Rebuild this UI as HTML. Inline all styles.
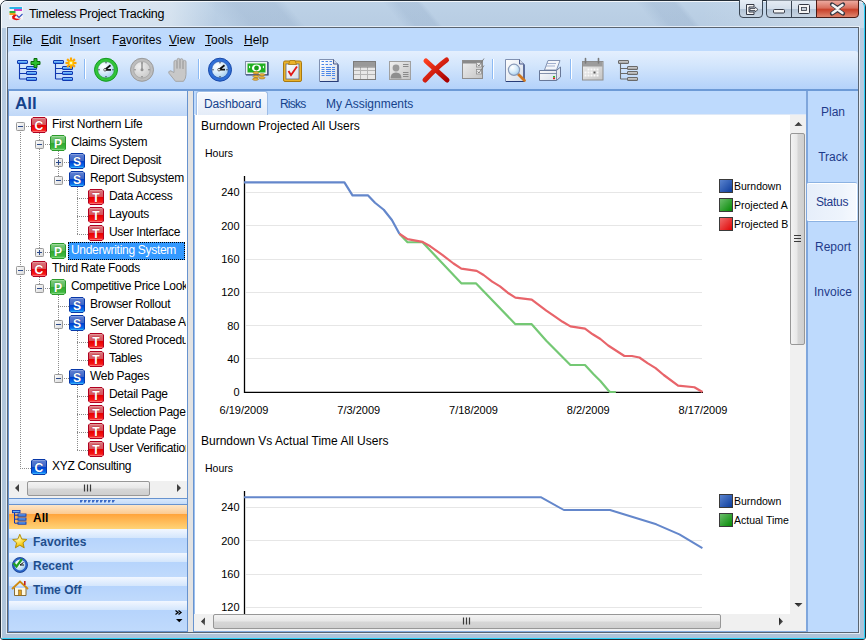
<!DOCTYPE html>
<html><head><meta charset="utf-8">
<style>
*{margin:0;padding:0;box-sizing:border-box}
html,body{width:866px;height:640px;overflow:hidden;background:#fff}
body{position:relative;font-family:"Liberation Sans",sans-serif;font-size:12px;color:#000}
.a{position:absolute}
#frame{left:0;top:0;width:866px;height:640px;border-radius:7px 7px 3px 3px;background:linear-gradient(180deg,#bdd2e7 0px,#b7cce2 28px,#b2c7dc 300px,#aec4da 640px);border:1px solid #222c36;overflow:hidden}
#tglow{left:0;top:0;width:866px;height:27px;background:linear-gradient(90deg,rgba(240,245,250,.7) 0,rgba(235,242,248,.55) 170px,rgba(230,238,246,0) 215px,rgba(230,238,246,0) 700px,rgba(235,242,248,.35) 866px)}
.streak{top:-5px;height:37px;transform:skewX(40deg);background:linear-gradient(90deg,rgba(90,120,160,0),rgba(90,120,160,.13) 35%,rgba(90,120,160,.13) 85%,rgba(90,120,160,0))}
#frame2{left:1px;top:1px;width:864px;height:638px;border-radius:6px 6px 2px 2px;border:1px solid rgba(255,255,255,.8);border-bottom-color:#2ad0f8;border-right-color:#2ad0f8}
#client{left:7px;top:27px;width:852px;height:606px;border:1px solid #5a6470;background:#bedafd;box-shadow:0 0 0 1px rgba(235,242,250,.85)}
#title{left:29px;top:7px;font-size:12.5px;color:#000;white-space:nowrap;letter-spacing:-0.3px}
.menu{top:33px;font-size:12px;color:#000;white-space:nowrap}
.menu u{text-decoration:underline;text-underline-offset:1px;text-decoration-thickness:1px}
#toolbar{left:8px;top:51px;width:850px;height:40px;border-radius:3px 3px 0 0;background:linear-gradient(180deg,#e4effe 0%,#d2e5fc 40%,#b4d2fa 100%);border-bottom:2px solid #6d9ad6}
.sep{top:59px;width:2px;height:20px;border-left:1px solid #8cbaf4;border-right:1px solid #fff}
#left{left:8px;top:91px;width:180px;height:541px;border-left:1px solid #6793cf;border-right:1px solid #6793cf;border-bottom:1px solid #6793cf;background:#fff}
#allhdr{left:0;top:0;width:178px;height:25px;background:linear-gradient(180deg,#e6f0fd 0%,#d2e4fb 50%,#c0d8f8 100%)}
#allhdr span{position:absolute;left:6px;top:3px;font-size:17px;font-weight:bold;color:#15428b}
#splitter{left:188px;top:91px;width:5px;height:541px;background:#e3e3e3}
#content{left:193px;top:91px;width:615px;height:541px;border-left:1px solid #6793cf;border-right:2px solid #7fa6dc;border-bottom:1px solid #84aade;background:#fff;overflow:hidden}
#tabstrip{left:0;top:0;width:613px;height:24px;background:#bedafd;border-bottom:1px solid #dfe9f7}
#nav{left:808px;top:91px;width:50px;height:541px;background:#bedafd}
.navt{left:0;width:50px;text-align:center;font-size:12px;color:#1e3a8a}
.tree{font-size:12px;white-space:nowrap;color:#000;line-height:14px;padding:0 1px;letter-spacing:-0.3px}
.sel{background:#3399ff;color:#fff;outline:1px dotted #000;outline-offset:-1px}
#treeclip{left:9px;top:116px;width:177px;height:365px;overflow:hidden}
#treein{left:-9px;top:-116px;width:200px;height:500px}
.hsb{background:#f0f0f0}
.thumbh{border:1px solid #979797;border-radius:2px;background:linear-gradient(180deg,#f3f3f3 0%,#e8e8e8 45%,#d6d6d6 55%,#cfcfcf 100%)}
.thumbv{border:1px solid #979797;border-radius:2px;background:linear-gradient(90deg,#f3f3f3 0%,#e8e8e8 45%,#d6d6d6 55%,#cfcfcf 100%)}
.nb{left:9px;width:178px;height:24px;background:linear-gradient(180deg,#f2f7ff 0px,#d4e6fc 9px,#b6d4fc 9px,#c0dafc 24px)}
.nb span{position:absolute;left:24px;top:6px;font-weight:bold;font-size:12px;color:#1f4e8c}
.ctext{font-size:12px;white-space:nowrap}
</style></head><body>
<svg width="0" height="0" style="position:absolute">
<defs>
<linearGradient id="gbox" x1="0" y1="0" x2="1" y2="1"><stop offset="0" stop-color="#fff"/><stop offset="1" stop-color="#d8d8d8"/></linearGradient>
<linearGradient id="gC" x1="0" y1="0" x2="0" y2="1"><stop offset="0" stop-color="#f0c0b8"/><stop offset=".12" stop-color="#d87078"/><stop offset=".5" stop-color="#d85058"/><stop offset=".52" stop-color="#e80000"/><stop offset=".85" stop-color="#f81818"/><stop offset="1" stop-color="#ffb0b0"/></linearGradient>
<linearGradient id="gP" x1="0" y1="0" x2="0" y2="1"><stop offset="0" stop-color="#c8f0c0"/><stop offset=".12" stop-color="#78c878"/><stop offset=".5" stop-color="#58b858"/><stop offset=".52" stop-color="#30a830"/><stop offset=".85" stop-color="#40b840"/><stop offset="1" stop-color="#b0f0b0"/></linearGradient>
<linearGradient id="gS" x1="0" y1="0" x2="0" y2="1"><stop offset="0" stop-color="#b8c8f0"/><stop offset=".12" stop-color="#5a7cd0"/><stop offset=".5" stop-color="#3a64c8"/><stop offset=".52" stop-color="#0040d0"/><stop offset=".85" stop-color="#0870f0"/><stop offset="1" stop-color="#60e0ff"/></linearGradient>
<path id="icbox" d="M2 .5 H14 L15.5 2 V14 L14 15.5 H2 L.5 14 V2 Z"/>
<g id="icC"><use href="#icbox" fill="url(#gC)" stroke="#b00020"/><text x="8" y="13.2" text-anchor="middle" font-family="Liberation Sans" font-weight="bold" font-size="13.5" fill="#fff" stroke="#a00010" stroke-width=".5" paint-order="stroke" transform="translate(8 0) scale(.9 1) translate(-8 0)">C</text></g>
<g id="icT"><use href="#icbox" fill="url(#gC)" stroke="#b00020"/><text x="8" y="13.2" text-anchor="middle" font-family="Liberation Sans" font-weight="bold" font-size="13.5" fill="#fff" stroke="#a00010" stroke-width=".5" paint-order="stroke" transform="translate(8 0) scale(.9 1) translate(-8 0)">T</text></g>
<g id="icP"><use href="#icbox" fill="url(#gP)" stroke="#2c9a2c"/><text x="8" y="13.2" text-anchor="middle" font-family="Liberation Sans" font-weight="bold" font-size="13.5" fill="#fff" stroke="#208020" stroke-width=".5" paint-order="stroke" transform="translate(8 0) scale(.9 1) translate(-8 0)">P</text></g>
<g id="icS"><use href="#icbox" fill="url(#gS)" stroke="#0838a8"/><text x="8" y="13.2" text-anchor="middle" font-family="Liberation Sans" font-weight="bold" font-size="13.5" fill="#fff" stroke="#002880" stroke-width=".5" paint-order="stroke" transform="translate(8 0) scale(.9 1) translate(-8 0)">S</text></g>
<g id="icCB"><use href="#icbox" fill="url(#gS)" stroke="#0838a8"/><text x="8" y="13.2" text-anchor="middle" font-family="Liberation Sans" font-weight="bold" font-size="13.5" fill="#fff" stroke="#002880" stroke-width=".5" paint-order="stroke" transform="translate(8 0) scale(.9 1) translate(-8 0)">C</text></g>
</defs></svg>
<div id="frame" class="a"><div id="tglow" class="a"></div><div class="a streak" style="left:215px;width:80px"></div><div class="a streak" style="left:392px;width:40px"></div><div class="a streak" style="left:645px;width:45px"></div></div>
<div id="frame2" class="a"></div>
<svg class="a" style="left:736px;top:0" width="130" height="20" viewBox="736 0 130 20">
<defs>
<linearGradient id="tbg" x1="0" y1="0" x2="0" y2="1"><stop offset="0" stop-color="#e6edf5"/><stop offset=".5" stop-color="#d4dfeb"/><stop offset=".52" stop-color="#b3c4d6"/><stop offset="1" stop-color="#c9d6e4"/></linearGradient>
<linearGradient id="tcl" x1="0" y1="0" x2="0" y2="1"><stop offset="0" stop-color="#eeb0a6"/><stop offset=".45" stop-color="#d9705e"/><stop offset=".55" stop-color="#c8412a"/><stop offset="1" stop-color="#e08a74"/></linearGradient>
</defs>
<path d="M739.5 0 V14 Q739.5 17.5 743 17.5 H759 Q762.5 17.5 762.5 14 V0" fill="url(#tbg)" stroke="#3a4654"/>
<path d="M766.5 0 V14 Q766.5 17.5 770 17.5 H816.5 V0 Z" fill="url(#tbg)" stroke="#3a4654"/>
<line x1="791.5" y1="1" x2="791.5" y2="17" stroke="#3a4654"/>
<path d="M816.5 0 V17.5 H855 Q858.5 17.5 858.5 14 V0 Z" fill="url(#tcl)" stroke="#4a1a14"/>
<path d="M746.5 4.5 H754 V7 H749 V12 H754 V14.5 H746.5 Z" fill="#f4f4f4" stroke="#343844"/>
<path d="M750 8.5 H755 V7 L758 9.5 L755 12 V10.5 H750 Z" fill="#f4f4f4" stroke="#343844" stroke-width=".8"/>
<rect x="773.5" y="9.5" width="11" height="3.5" rx="1" fill="#f4f4f4" stroke="#343844"/>
<rect x="798.5" y="4.5" width="11" height="9" rx="1" fill="#f4f4f4" stroke="#343844"/>
<rect x="801.5" y="7.5" width="5" height="3" fill="#c8d0da" stroke="#343844" stroke-width=".8"/>
<path d="M832 4.5 L837.5 8 L843 4.5 M832 13.5 L837.5 10 L843 13.5" stroke="#343844" stroke-width="4.2" fill="none" stroke-linecap="round"/>
<path d="M832.5 5 L837.5 8.5 L842.5 5 M832.5 13 L837.5 9.5 L842.5 13" stroke="#f6f6f6" stroke-width="2.4" fill="none" stroke-linecap="round"/>
</svg>
<svg class="a" style="left:8px;top:5px" width="17" height="17" viewBox="0 0 17 17">
<rect x="1" y="1.5" width="14" height="13" fill="#f4f4f8"/>
<rect x="1.5" y="2" width="12.5" height="2" fill="#2ab4e8"/>
<rect x="6" y="4" width="8" height="2" fill="#d040c0"/>
<rect x="1.5" y="6" width="6" height="2" fill="#30b040"/>
<rect x="1.5" y="8" width="6" height="2" fill="#f0a020"/>
<path d="M4 11.5 Q6 8.5 10 10 Q7 10.5 6.5 12.5 Q8 14.5 13 13.5 Q9 16.5 4.5 14 Z" fill="#e01010"/>
<path d="M9 10.5 L11 12.5 L14.5 9" stroke="#3050c0" stroke-width="1.1" fill="none"/>
</svg>
<div id="title" class="a">Timeless Project Tracking</div>
<div id="client" class="a"></div>
<div class="a menu" style="left:13px"><u>F</u>ile</div>
<div class="a menu" style="left:41px"><u>E</u>dit</div>
<div class="a menu" style="left:70px"><u>I</u>nsert</div>
<div class="a menu" style="left:112px">F<u>a</u>vorites</div>
<div class="a menu" style="left:169px"><u>V</u>iew</div>
<div class="a menu" style="left:205px"><u>T</u>ools</div>
<div class="a menu" style="left:244px"><u>H</u>elp</div>
<div id="toolbar" class="a"></div>
<div class="a sep" style="left:84px"></div>
<div class="a sep" style="left:198px"></div>
<div class="a sep" style="left:492px"></div>
<div class="a sep" style="left:570px"></div>
<svg class="a" style="left:8px;top:51px" width="850" height="38" viewBox="8 51 850 38">
<defs>
<linearGradient id="tbar" x1="0" y1="0" x2="0" y2="1"><stop offset="0" stop-color="#b4dcff"/><stop offset=".5" stop-color="#5ca8f8"/><stop offset="1" stop-color="#2a78e0"/></linearGradient>
<linearGradient id="gbar" x1="0" y1="0" x2="0" y2="1"><stop offset="0" stop-color="#d8d8d8"/><stop offset="1" stop-color="#9a9a9a"/></linearGradient>
<radialGradient id="face" cx=".35" cy=".3" r=".8"><stop offset="0" stop-color="#ffffff"/><stop offset=".5" stop-color="#d8ecfa"/><stop offset="1" stop-color="#9cc8ec"/></radialGradient>
<radialGradient id="gface" cx=".35" cy=".3" r=".8"><stop offset="0" stop-color="#f0f0f0"/><stop offset="1" stop-color="#c8c8c8"/></radialGradient>
<linearGradient id="paper" x1="0" y1="0" x2="1" y2="1"><stop offset="0" stop-color="#ffffff"/><stop offset="1" stop-color="#d4dce8"/></linearGradient>
<linearGradient id="gray1" x1="0" y1="0" x2="1" y2="1"><stop offset="0" stop-color="#f0f0f0"/><stop offset="1" stop-color="#c4c4c4"/></linearGradient>
<linearGradient id="redx" x1="0" y1="0" x2="1" y2="1"><stop offset="0" stop-color="#ff4020"/><stop offset="1" stop-color="#a80000"/></linearGradient>
</defs>
<path d="M19.5 63 V79 M19.5 68.5 H26 M19.5 73.5 H26 M19.5 79 H26" stroke="#1038b0" stroke-width="1.1" fill="none"/>
<rect x="17.5" y="60.5" width="10" height="3" rx=".4" fill="url(#tbar)" stroke="#1038b0"/>
<rect x="26.5" y="66.5" width="10" height="3" rx=".4" fill="url(#tbar)" stroke="#1038b0"/>
<rect x="26.5" y="71.5" width="10" height="3" rx=".4" fill="url(#tbar)" stroke="#1038b0"/>
<rect x="26.5" y="77.5" width="10" height="3" rx=".4" fill="url(#tbar)" stroke="#1038b0"/>
<path d="M34 58.5 h3 v3 h3 v3 h-3 v3 h-3 v-3 h-3 v-3 h3 z" fill="#2cc02c" stroke="#0a6a0a" stroke-width="1"/>
<path d="M55.5 63 V79 M55.5 68.5 H62 M55.5 73.5 H62 M55.5 79 H62" stroke="#1038b0" stroke-width="1.1" fill="none"/>
<rect x="53.5" y="60.5" width="10" height="3" rx=".4" fill="url(#tbar)" stroke="#1038b0"/>
<rect x="62.5" y="66.5" width="10" height="3" rx=".4" fill="url(#tbar)" stroke="#1038b0"/>
<rect x="62.5" y="71.5" width="10" height="3" rx=".4" fill="url(#tbar)" stroke="#1038b0"/>
<rect x="62.5" y="77.5" width="10" height="3" rx=".4" fill="url(#tbar)" stroke="#1038b0"/>
<g transform="translate(71 63)"><line x1="0" y1="0" x2="5.50" y2="0.00" stroke="#ffa800" stroke-width="2.2"/><line x1="0" y1="0" x2="3.89" y2="3.89" stroke="#ffa800" stroke-width="2.2"/><line x1="0" y1="0" x2="0.00" y2="5.50" stroke="#ffa800" stroke-width="2.2"/><line x1="0" y1="0" x2="-3.89" y2="3.89" stroke="#ffa800" stroke-width="2.2"/><line x1="0" y1="0" x2="-5.50" y2="0.00" stroke="#ffa800" stroke-width="2.2"/><line x1="0" y1="0" x2="-3.89" y2="-3.89" stroke="#ffa800" stroke-width="2.2"/><line x1="0" y1="0" x2="-0.00" y2="-5.50" stroke="#ffa800" stroke-width="2.2"/><line x1="0" y1="0" x2="3.89" y2="-3.89" stroke="#ffa800" stroke-width="2.2"/><circle r="2.2" fill="#ffe020"/><circle r="1" fill="#fff"/></g>
<circle cx="106" cy="69.8" r="11.5" fill="#32c43a" stroke="#139a20" stroke-width="1"/>
<circle cx="106" cy="69.8" r="8.3" fill="url(#face)" stroke="#139a20" stroke-width=".6"/>
<circle cx="106" cy="62.8" r=".7" fill="#203040"/>
<circle cx="113" cy="69.8" r=".7" fill="#203040"/>
<circle cx="106" cy="76.8" r=".7" fill="#203040"/>
<circle cx="99" cy="69.8" r=".7" fill="#203040"/>
<path d="M105 69.8 L110.5 65.3 M105 69.8 H111" stroke="#101010" stroke-width="1.8" fill="none"/><circle cx="105" cy="69.8" r="1.3" fill="#fff" stroke="#101010" stroke-width=".6"/>
<circle cx="142" cy="69.8" r="11.5" fill="#bdbdbd" stroke="#9a9a9a" stroke-width="1"/>
<circle cx="142" cy="69.8" r="8.3" fill="url(#gface)" stroke="#9a9a9a" stroke-width=".6"/>
<circle cx="142" cy="62.8" r=".7" fill="#707070"/>
<circle cx="149" cy="69.8" r=".7" fill="#707070"/>
<circle cx="142" cy="76.8" r=".7" fill="#707070"/>
<circle cx="135" cy="69.8" r=".7" fill="#707070"/>
<path d="M142 69.8 V62.8" stroke="#808080" stroke-width="1.2"/><circle cx="142" cy="69.8" r="1.5" fill="#909090"/>
<g transform="translate(3 0.5)"><path d="M171 72 V61.5 q0-1.6 1.5-1.6 t1.5 1.6 V68 V59.5 q0-1.6 1.5-1.6 t1.5 1.6 V68 V59.8 q0-1.6 1.5-1.6 t1.5 1.6 V68.5 V61.5 q0-1.6 1.5-1.6 t1.5 1.6 V74 q0 4 -2.5 6.8 h-8 l-6.5 -8 q-0.8-1.6 0.6-2.3 q1.3-0.6 2.6 0.6 z" fill="#c8c8c8" stroke="#a4a4a4" stroke-width="1"/></g>
<circle cx="220" cy="69.7" r="11.5" fill="#2f6fd6" stroke="#1848a8" stroke-width="1"/>
<circle cx="220" cy="69.7" r="8.3" fill="url(#face)" stroke="#1848a8" stroke-width=".6"/>
<circle cx="220" cy="62.7" r=".7" fill="#203040"/>
<circle cx="227" cy="69.7" r=".7" fill="#203040"/>
<circle cx="220" cy="76.7" r=".7" fill="#203040"/>
<circle cx="213" cy="69.7" r=".7" fill="#203040"/>
<path d="M219 69.7 L224.5 65.2 M219 69.7 H225" stroke="#101010" stroke-width="1.8" fill="none"/><circle cx="219" cy="69.7" r="1.3" fill="#fff" stroke="#101010" stroke-width=".6"/>
<rect x="245.5" y="61.5" width="22" height="13" fill="#eef2f8" stroke="#8090a8"/>
<path d="M268 62 V75 H246" stroke="#2a3c70" stroke-width="1.2" fill="none"/>
<rect x="247.5" y="63.5" width="18" height="9" fill="#20b020"/>
<ellipse cx="256.5" cy="68" rx="4.6" ry="3.6" fill="#fff"/><circle cx="256.5" cy="68" r="2.4" fill="#18a018"/>
<path d="M249 65.5 L250.5 67 L249 68.5 Z M264 65.5 L262.5 67 L264 68.5 Z" fill="#fff"/>
<ellipse cx="256" cy="72.8" rx="3" ry="1.1" fill="#f4c040" stroke="#a87010" stroke-width=".7"/>
<ellipse cx="262" cy="74.8" rx="3" ry="1.1" fill="#f4c040" stroke="#a87010" stroke-width=".7"/>
<ellipse cx="256" cy="76.4" rx="3" ry="1.1" fill="#f4c040" stroke="#a87010" stroke-width=".7"/>
<ellipse cx="262" cy="77.8" rx="3" ry="1.1" fill="#f4c040" stroke="#a87010" stroke-width=".7"/>
<ellipse cx="255.5" cy="79.2" rx="3" ry="1.1" fill="#f4c040" stroke="#a87010" stroke-width=".7"/>
<rect x="283.5" y="61" width="18" height="20.5" rx="1.5" fill="#eab22a" stroke="#a87810"/>
<rect x="286" y="64" width="13" height="15" fill="url(#paper)" stroke="#5a6a90" stroke-width=".8"/>
<path d="M288.5 64.5 L290 60.5 H295 L296.5 64.5 Z" fill="#eab22a" stroke="#a87810" stroke-width=".8"/>
<path d="M288.5 71 L291 75 L297 66.5" stroke="#e01818" stroke-width="1.8" fill="none"/>
<path d="M319.5 59.5 H333.5 L338 64 V81.5 H319.5 Z" fill="url(#paper)" stroke="#8090b0"/>
<path d="M338 64.5 V81.5 H320" stroke="#283c78" stroke-width="1.2" fill="none"/><path d="M333.5 59.5 V64 H338" fill="#d0d8e8" stroke="#283c78" stroke-width=".8"/>
<path d="M321.5 61.5 h2.5 M325.5 61.5 h2.5 M329.5 61.5 h2.5" stroke="#4a86e8" stroke-width="1"/>
<path d="M321.5 64.5 h2.5 M325.5 64.5 h2.5 M329.5 64.5 h2.5" stroke="#4a86e8" stroke-width="1"/>
<path d="M321.5 67.5 h3 M326 67.5 h5 M332 67.5 h3" stroke="#4a86e8" stroke-width="1"/>
<path d="M321.5 69.5 h3 M326 69.5 h5 M332 69.5 h3" stroke="#4a86e8" stroke-width="1"/>
<path d="M321.5 71.5 h3 M326 71.5 h5 M332 71.5 h3" stroke="#4a86e8" stroke-width="1"/>
<path d="M321.5 73.5 h3 M326 73.5 h5 M332 73.5 h3" stroke="#4a86e8" stroke-width="1"/>
<path d="M321.5 75.5 h3 M326 75.5 h5 M332 75.5 h3" stroke="#4a86e8" stroke-width="1"/>
<path d="M332 78.5 h3" stroke="#4a86e8" stroke-width="1"/>
<rect x="353.5" y="61.5" width="22" height="18" fill="#e8e8e8" stroke="#7c7c7c"/>
<rect x="354" y="62" width="21" height="4.5" fill="#999"/>
<path d="M354 70.5 H375 M354 74.5 H375 M360.5 67 V79 M367.5 67 V79" stroke="#b4b4b4" stroke-width="1"/>
<path d="M354 67 H375" stroke="#7c7c7c" stroke-width="1"/>
<rect x="389.5" y="61.5" width="21" height="18" fill="url(#gray1)" stroke="#a0a0a0"/>
<circle cx="396" cy="68" r="3.4" fill="#9a9a9a"/><path d="M390.5 78.5 q0-6 5.5-6 t5.5 6 z" fill="#8e8e8e"/>
<path d="M403 64.5 h5.5 M403 66.5 h5.5 M403 72.5 h5.5 M403 74.5 h5.5 M403 76.5 h5.5" stroke="#8a8a8a" stroke-width="1"/>
<path d="M426 61 L447 80 M446.5 60 Q437 67 425 80" stroke="url(#redx)" stroke-width="5" stroke-linecap="round" fill="none"/>
<rect x="462.5" y="60.5" width="20" height="18" fill="url(#gray1)" stroke="#8e8e8e"/>
<rect x="463" y="61" width="19" height="2.5" fill="#8a8a8a"/>
<rect x="476.5" y="62.5" width="5" height="4.5" fill="#e8e8e8" stroke="#909090" stroke-width=".8"/><rect x="476.5" y="69.5" width="5" height="4.5" fill="#e8e8e8" stroke="#909090" stroke-width=".8"/>
<path d="M477.5 64.5 L479 66 L484 58.5 M477.5 71.5 L479 73 L484 65.5" stroke="#7a7a7a" stroke-width=".9" fill="none"/>
<path d="M505.5 59.5 H519.5 L524 64 V81.5 H505.5 Z" fill="url(#paper)" stroke="#8090b0"/>
<path d="M524 64.5 V81.5 H506" stroke="#283c78" stroke-width="1.2" fill="none"/><path d="M519.5 59.5 V64 H524" fill="#d0d8e8" stroke="#283c78" stroke-width=".8"/>
<path d="M518 74 L524.5 80.5" stroke="#d07820" stroke-width="2.8" stroke-linecap="round"/>
<circle cx="514" cy="69.8" r="5.6" fill="url(#face)" stroke="#8a9ab8" stroke-width="1.2"/>
<path d="M544.5 70 L548 60.5 H560 L556.5 70 Z" fill="#f4f6fa" stroke="#7888a8" stroke-width=".9"/>
<path d="M547 63.5 h9 M546 66 h9" stroke="#98a8c8" stroke-width=".9"/>
<path d="M539.5 70.5 H556.5 L560.5 67 V77 L556.5 80.5 H539.5 Z" fill="url(#paper)" stroke="#687898"/>
<path d="M556.5 70.5 V80.5 M539.5 73.5 H556.5" stroke="#687898" stroke-width=".8"/>
<rect x="553" y="76" width="2" height="1.6" fill="#20c020"/><rect x="553" y="77.6" width="2" height="1.6" fill="#e02020"/>
<rect x="582.5" y="61.5" width="20.5" height="18.5" fill="url(#gray1)" stroke="#8e8e8e"/>
<rect x="583" y="62" width="19.5" height="4.5" fill="#9c9c9c"/>
<path d="M585.5 58.5 V63 M598.5 58.5 V63" stroke="#7a7a7a" stroke-width="1.6" stroke-linecap="round"/>
<rect x="587.5" y="68.5" width="2" height="2" fill="#fafafa"/>
<rect x="590.5" y="68.5" width="2" height="2" fill="#fafafa"/>
<rect x="593.5" y="68.5" width="2" height="2" fill="#fafafa"/>
<rect x="596.5" y="68.5" width="2" height="2" fill="#fafafa"/>
<rect x="584.5" y="71.5" width="2" height="2" fill="#fafafa"/>
<rect x="587.5" y="71.5" width="2" height="2" fill="#fafafa"/>
<rect x="590.5" y="71.5" width="2" height="2" fill="#fafafa"/>
<rect x="593.5" y="71.5" width="2" height="2" fill="#fafafa"/>
<rect x="596.5" y="71.5" width="2" height="2" fill="#fafafa"/>
<rect x="584.5" y="74.5" width="2" height="2" fill="#fafafa"/>
<rect x="587.5" y="74.5" width="2" height="2" fill="#fafafa"/>
<rect x="590.5" y="74.5" width="2" height="2" fill="#fafafa"/>
<rect x="593.5" y="74.5" width="2" height="2" fill="#fafafa"/>
<rect x="596.5" y="74.5" width="2" height="2" fill="#fafafa"/>
<rect x="593.5" y="71.5" width="2" height="2" fill="#555"/>
<path d="M620.5 63 V79 M620.5 68.5 H627 M620.5 73.5 H627 M620.5 79 H627" stroke="#6a6a6a" stroke-width="1.1" fill="none"/>
<rect x="618.5" y="60.5" width="10" height="3" rx=".4" fill="url(#gbar)" stroke="#6a6a6a"/>
<rect x="627.5" y="66.5" width="10" height="3" rx=".4" fill="url(#gbar)" stroke="#6a6a6a"/>
<rect x="627.5" y="71.5" width="10" height="3" rx=".4" fill="url(#gbar)" stroke="#6a6a6a"/>
<rect x="627.5" y="77.5" width="10" height="3" rx=".4" fill="url(#gbar)" stroke="#6a6a6a"/>
</svg>

<div id="left" class="a">
  <div id="allhdr" class="a"><span>All</span></div>
</div>
<div id="treeclip" class="a"><div id="treein" class="a">
<svg class="a" style="left:0;top:0" width="187" height="480">
<line x1="20.5" y1="126" x2="20.5" y2="469" stroke="#8c8c8c" stroke-dasharray="1 1"/>
<line x1="39.5" y1="133" x2="39.5" y2="253" stroke="#8c8c8c" stroke-dasharray="1 1"/>
<line x1="58.5" y1="151" x2="58.5" y2="181" stroke="#8c8c8c" stroke-dasharray="1 1"/>
<line x1="77.5" y1="187" x2="77.5" y2="235" stroke="#8c8c8c" stroke-dasharray="1 1"/>
<line x1="39.5" y1="277" x2="39.5" y2="289" stroke="#8c8c8c" stroke-dasharray="1 1"/>
<line x1="58.5" y1="295" x2="58.5" y2="379" stroke="#8c8c8c" stroke-dasharray="1 1"/>
<line x1="77.5" y1="331" x2="77.5" y2="361" stroke="#8c8c8c" stroke-dasharray="1 1"/>
<line x1="77.5" y1="385" x2="77.5" y2="451" stroke="#8c8c8c" stroke-dasharray="1 1"/>
<line x1="20" y1="126.5" x2="31" y2="126.5" stroke="#8c8c8c" stroke-dasharray="1 1"/>
<line x1="39" y1="144.5" x2="50" y2="144.5" stroke="#8c8c8c" stroke-dasharray="1 1"/>
<line x1="58" y1="162.5" x2="69" y2="162.5" stroke="#8c8c8c" stroke-dasharray="1 1"/>
<line x1="58" y1="180.5" x2="69" y2="180.5" stroke="#8c8c8c" stroke-dasharray="1 1"/>
<line x1="77" y1="198.5" x2="88" y2="198.5" stroke="#8c8c8c" stroke-dasharray="1 1"/>
<line x1="77" y1="216.5" x2="88" y2="216.5" stroke="#8c8c8c" stroke-dasharray="1 1"/>
<line x1="77" y1="234.5" x2="88" y2="234.5" stroke="#8c8c8c" stroke-dasharray="1 1"/>
<line x1="39" y1="252.5" x2="50" y2="252.5" stroke="#8c8c8c" stroke-dasharray="1 1"/>
<line x1="20" y1="270.5" x2="31" y2="270.5" stroke="#8c8c8c" stroke-dasharray="1 1"/>
<line x1="39" y1="288.5" x2="50" y2="288.5" stroke="#8c8c8c" stroke-dasharray="1 1"/>
<line x1="58" y1="306.5" x2="69" y2="306.5" stroke="#8c8c8c" stroke-dasharray="1 1"/>
<line x1="58" y1="324.5" x2="69" y2="324.5" stroke="#8c8c8c" stroke-dasharray="1 1"/>
<line x1="77" y1="342.5" x2="88" y2="342.5" stroke="#8c8c8c" stroke-dasharray="1 1"/>
<line x1="77" y1="360.5" x2="88" y2="360.5" stroke="#8c8c8c" stroke-dasharray="1 1"/>
<line x1="58" y1="378.5" x2="69" y2="378.5" stroke="#8c8c8c" stroke-dasharray="1 1"/>
<line x1="77" y1="396.5" x2="88" y2="396.5" stroke="#8c8c8c" stroke-dasharray="1 1"/>
<line x1="77" y1="414.5" x2="88" y2="414.5" stroke="#8c8c8c" stroke-dasharray="1 1"/>
<line x1="77" y1="432.5" x2="88" y2="432.5" stroke="#8c8c8c" stroke-dasharray="1 1"/>
<line x1="77" y1="450.5" x2="88" y2="450.5" stroke="#8c8c8c" stroke-dasharray="1 1"/>
<line x1="20" y1="468.5" x2="31" y2="468.5" stroke="#8c8c8c" stroke-dasharray="1 1"/>
<rect x="16.5" y="122.5" width="8" height="8" rx=".8" fill="url(#gbox)" stroke="#999"/>
<line x1="18" y1="126.5" x2="23" y2="126.5" stroke="#2b4a8a"/>
<use href="#icC" x="31" y="117"/>
<rect x="35.5" y="140.5" width="8" height="8" rx=".8" fill="url(#gbox)" stroke="#999"/>
<line x1="37" y1="144.5" x2="42" y2="144.5" stroke="#2b4a8a"/>
<use href="#icP" x="50" y="135"/>
<rect x="54.5" y="158.5" width="8" height="8" rx=".8" fill="url(#gbox)" stroke="#999"/>
<line x1="56" y1="162.5" x2="61" y2="162.5" stroke="#2b4a8a"/>
<line x1="58.5" y1="160" x2="58.5" y2="165" stroke="#2b4a8a"/>
<use href="#icS" x="69" y="153"/>
<rect x="54.5" y="176.5" width="8" height="8" rx=".8" fill="url(#gbox)" stroke="#999"/>
<line x1="56" y1="180.5" x2="61" y2="180.5" stroke="#2b4a8a"/>
<use href="#icS" x="69" y="171"/>
<use href="#icT" x="88" y="189"/>
<use href="#icT" x="88" y="207"/>
<use href="#icT" x="88" y="225"/>
<rect x="35.5" y="248.5" width="8" height="8" rx=".8" fill="url(#gbox)" stroke="#999"/>
<line x1="37" y1="252.5" x2="42" y2="252.5" stroke="#2b4a8a"/>
<line x1="39.5" y1="250" x2="39.5" y2="255" stroke="#2b4a8a"/>
<use href="#icP" x="50" y="243"/>
<rect x="16.5" y="266.5" width="8" height="8" rx=".8" fill="url(#gbox)" stroke="#999"/>
<line x1="18" y1="270.5" x2="23" y2="270.5" stroke="#2b4a8a"/>
<use href="#icC" x="31" y="261"/>
<rect x="35.5" y="284.5" width="8" height="8" rx=".8" fill="url(#gbox)" stroke="#999"/>
<line x1="37" y1="288.5" x2="42" y2="288.5" stroke="#2b4a8a"/>
<use href="#icP" x="50" y="279"/>
<use href="#icS" x="69" y="297"/>
<rect x="54.5" y="320.5" width="8" height="8" rx=".8" fill="url(#gbox)" stroke="#999"/>
<line x1="56" y1="324.5" x2="61" y2="324.5" stroke="#2b4a8a"/>
<use href="#icS" x="69" y="315"/>
<use href="#icT" x="88" y="333"/>
<use href="#icT" x="88" y="351"/>
<rect x="54.5" y="374.5" width="8" height="8" rx=".8" fill="url(#gbox)" stroke="#999"/>
<line x1="56" y1="378.5" x2="61" y2="378.5" stroke="#2b4a8a"/>
<use href="#icS" x="69" y="369"/>
<use href="#icT" x="88" y="387"/>
<use href="#icT" x="88" y="405"/>
<use href="#icT" x="88" y="423"/>
<use href="#icT" x="88" y="441"/>
<use href="#icCB" x="31" y="459"/>
</svg>
<div class="tree a" style="left:51px;top:117px">First Northern Life</div>
<div class="tree a" style="left:70px;top:135px">Claims System</div>
<div class="tree a" style="left:89px;top:153px">Direct Deposit</div>
<div class="tree a" style="left:89px;top:171px">Report Subsystem</div>
<div class="tree a" style="left:108px;top:189px">Data Access</div>
<div class="tree a" style="left:108px;top:207px">Layouts</div>
<div class="tree a" style="left:108px;top:225px">User Interface</div>
<div class="tree a sel" style="left:68px;top:242px;width:117px;height:18px;padding:1px 0 0 3px">Underwriting System</div>
<div class="tree a" style="left:51px;top:261px">Third Rate Foods</div>
<div class="tree a" style="left:70px;top:279px">Competitive Price Look</div>
<div class="tree a" style="left:89px;top:297px">Browser Rollout</div>
<div class="tree a" style="left:89px;top:315px">Server Database Access</div>
<div class="tree a" style="left:108px;top:333px">Stored Procedures</div>
<div class="tree a" style="left:108px;top:351px">Tables</div>
<div class="tree a" style="left:89px;top:369px">Web Pages</div>
<div class="tree a" style="left:108px;top:387px">Detail Page</div>
<div class="tree a" style="left:108px;top:405px">Selection Page</div>
<div class="tree a" style="left:108px;top:423px">Update Page</div>
<div class="tree a" style="left:108px;top:441px">User Verification</div>
<div class="tree a" style="left:51px;top:459px">XYZ Consulting</div>
</div></div>
<!-- left h scrollbar -->
<div class="a hsb" style="left:9px;top:481px;width:178px;height:17px"></div>
<div class="a thumbh" style="left:27px;top:481px;width:123px;height:15px"></div>
<div class="a" style="left:15px;top:484px;width:0;height:0;border-top:4px solid transparent;border-bottom:4px solid transparent;border-right:4px solid #404040"></div>
<div class="a" style="left:177px;top:484px;width:0;height:0;border-top:4px solid transparent;border-bottom:4px solid transparent;border-left:4px solid #404040"></div>
<div class="a" style="left:9px;top:498px;width:178px;height:7px;background:linear-gradient(180deg,#6793cf 0,#6793cf 1px,#d8e8fc 1px,#c4dcfa 6px,#6793cf 6px)"></div>
<div class="nb a" style="top:505px;background:linear-gradient(180deg,#fde6c8 0px,#fcca90 9px,#ffa33a 9px,#ffd478 24px)"><span style="color:#000">All</span></div>
<div class="nb a" style="top:529px"><span>Favorites</span></div>
<div class="nb a" style="top:553px"><span>Recent</span></div>
<div class="nb a" style="top:577px"><span>Time Off</span></div>
<div class="nb a" style="top:601px;height:30px;background:linear-gradient(180deg,#f2f7ff 0px,#d4e6fc 9px,#b6d4fc 9px,#c0dafc 30px)"></div>

<svg class="a" style="left:9px;top:498px" width="178" height="134" viewBox="9 498 178 134">
<defs>
<linearGradient id="tbar2" x1="0" y1="0" x2="0" y2="1"><stop offset="0" stop-color="#b4dcff"/><stop offset=".5" stop-color="#5ca8f8"/><stop offset="1" stop-color="#2a78e0"/></linearGradient>
<radialGradient id="starg" cx=".4" cy=".35" r=".7"><stop offset="0" stop-color="#fff8b0"/><stop offset=".6" stop-color="#f8d020"/><stop offset="1" stop-color="#d8a000"/></radialGradient>
<radialGradient id="face2" cx=".35" cy=".3" r=".8"><stop offset="0" stop-color="#ffffff"/><stop offset=".5" stop-color="#d8ecfa"/><stop offset="1" stop-color="#9cc8ec"/></radialGradient>
</defs>
<g fill="#3a6ac8"><path d="M80 500 h3 l-1.5 2.5 h-1.5 z"/><path d="M84 500 h3 l-1.5 2.5 h-1.5 z"/><path d="M88 500 h3 l-1.5 2.5 h-1.5 z"/><path d="M92 500 h3 l-1.5 2.5 h-1.5 z"/><path d="M96 500 h3 l-1.5 2.5 h-1.5 z"/><path d="M100 500 h3 l-1.5 2.5 h-1.5 z"/><path d="M104 500 h3 l-1.5 2.5 h-1.5 z"/><path d="M108 500 h3 l-1.5 2.5 h-1.5 z"/><path d="M112 500 h3 l-1.5 2.5 h-1.5 z"/></g><path d="M14.5 513 V523 M14.5 515.2 H18 M14.5 519.2 H18 M14.5 523.2 H18" stroke="#1038b0" stroke-width="1" fill="none"/><rect x="12.5" y="510.5" width="7.5" height="2.2" fill="url(#tbar2)" stroke="#1038b0" stroke-width=".9"/><rect x="18" y="514" width="8" height="2.2" fill="url(#tbar2)" stroke="#1038b0" stroke-width=".9"/><rect x="18" y="518" width="8" height="2.2" fill="url(#tbar2)" stroke="#1038b0" stroke-width=".9"/><rect x="18" y="522" width="8" height="2.2" fill="url(#tbar2)" stroke="#1038b0" stroke-width=".9"/><polygon points="19.80,534.30 21.80,539.05 26.93,539.48 23.03,542.85 24.21,547.87 19.80,545.20 15.39,547.87 16.57,542.85 12.67,539.48 17.80,539.05" fill="url(#starg)" stroke="#b08800" stroke-width=".9" stroke-linejoin="round"/><circle cx="20" cy="565" r="7.5" fill="#2a64c8" stroke="#103888" stroke-width=".8"/><circle cx="20" cy="565" r="5.4" fill="url(#face2)"/><path d="M20 565 L23.5 562.5 M20 565 H24" stroke="#101010" stroke-width="1"/><path d="M13.5 563 L16.5 566.5 L22 559" stroke="#20a020" stroke-width="2.2" fill="none"/><path d="M14.5 588 V595.5 H26 V588" fill="#fff8e0" stroke="#806020" stroke-width=".9"/><path d="M12 589 L20 581.5 L28 589" fill="none" stroke="#d08a10" stroke-width="1.8"/><rect x="24" y="581" width="1.6" height="4" fill="#c02020"/><rect x="18.5" y="590" width="3" height="5.5" fill="#e0a020" stroke="#806020" stroke-width=".6"/><path d="M175.5 610.5 L178 612.5 L175.5 614.5 M178.5 610.5 L181 612.5 L178.5 614.5" stroke="#000" stroke-width="1.3" fill="none"/><path d="M176 619 H182.5 L179.25 622.2 Z" fill="#000"/></svg>
<div id="splitter" class="a"></div>
<div id="content" class="a">
  <div id="tabstrip" class="a"></div>
</div>
<div class="a" style="left:196px;top:91px;width:72px;height:24px;border:1px solid #9ebde6;border-bottom:none;border-radius:3px 3px 0 0;background:linear-gradient(180deg,#f6f9fe,#e4ecf8);box-shadow:inset 1px 1px 0 #fff"></div>
<div class="a ctext" style="left:204px;top:97px;color:#15428b;letter-spacing:-0.15px">Dashboard</div>
<div class="a ctext" style="left:280px;top:97px;color:#15428b;letter-spacing:-0.8px">Risks</div>
<div class="a ctext" style="left:326px;top:97px;color:#15428b">My Assignments</div>
<svg class="a" style="left:194px;top:115px" width="596" height="499" viewBox="194 115 596 499">
<text x="201" y="130" font-family="Liberation Sans" font-size="12" fill="#000">Burndown Projected All Users</text>
<text x="205" y="157" font-family="Liberation Sans" font-size="10.5" fill="#000">Hours</text>
<line x1="246" y1="358.5" x2="702" y2="358.5" stroke="#e6e6e6" stroke-width="1"/>
<line x1="246" y1="325.5" x2="702" y2="325.5" stroke="#e6e6e6" stroke-width="1"/>
<line x1="246" y1="292.5" x2="702" y2="292.5" stroke="#e6e6e6" stroke-width="1"/>
<line x1="246" y1="259.5" x2="702" y2="259.5" stroke="#e6e6e6" stroke-width="1"/>
<line x1="246" y1="225.5" x2="702" y2="225.5" stroke="#e6e6e6" stroke-width="1"/>
<line x1="246" y1="192.5" x2="702" y2="192.5" stroke="#e6e6e6" stroke-width="1"/>
<text x="239.5" y="396.3" text-anchor="end" font-family="Liberation Sans" font-size="11" fill="#000">0</text>
<text x="239.5" y="362.98" text-anchor="end" font-family="Liberation Sans" font-size="11" fill="#000">40</text>
<text x="239.5" y="329.66" text-anchor="end" font-family="Liberation Sans" font-size="11" fill="#000">80</text>
<text x="239.5" y="296.34000000000003" text-anchor="end" font-family="Liberation Sans" font-size="11" fill="#000">120</text>
<text x="239.5" y="263.02" text-anchor="end" font-family="Liberation Sans" font-size="11" fill="#000">160</text>
<text x="239.5" y="229.70000000000002" text-anchor="end" font-family="Liberation Sans" font-size="11" fill="#000">200</text>
<text x="239.5" y="196.38" text-anchor="end" font-family="Liberation Sans" font-size="11" fill="#000">240</text>
<line x1="244.5" y1="176" x2="244.5" y2="393" stroke="#000" stroke-width="1.3"/>
<line x1="244" y1="392.3" x2="703" y2="392.3" stroke="#000" stroke-width="1.3"/>
<text x="244.0" y="414" text-anchor="middle" font-family="Liberation Sans" font-size="11" fill="#000">6/19/2009</text>
<text x="358.75" y="414" text-anchor="middle" font-family="Liberation Sans" font-size="11" fill="#000">7/3/2009</text>
<text x="473.5" y="414" text-anchor="middle" font-family="Liberation Sans" font-size="11" fill="#000">7/18/2009</text>
<text x="588.25" y="414" text-anchor="middle" font-family="Liberation Sans" font-size="11" fill="#000">8/2/2009</text>
<text x="703.0" y="414" text-anchor="middle" font-family="Liberation Sans" font-size="11" fill="#000">8/17/2009</text>
<polyline points="399.4,233.75 407.5,242.25 422.5,242.25 461.3,283.3 475.9,283.3 515.4,324.2 531.7,324.2 546.3,340.7 570.4,365 585,365 593.6,374.2 600.4,381 608.2,390.2 610,392 615.9,392" fill="none" stroke="#74c874" stroke-width="2.2" stroke-linejoin="round"/>
<polyline points="399.4,233.75 407.5,239.1 422.5,241.9 430.3,246.3 442.3,254.9 453.5,263.5 461.3,268.7 476.7,270.9 483.6,275 492.2,281.6 500,286.4 507.7,292.7 515.4,297.6 531.7,299.6 546.3,310.6 554,315.8 562.6,321.8 570.4,326.4 585,328.7 592.7,334.3 600.4,339 608.2,345.5 615.9,350.5 624.4,356 631.9,356 639.4,357.5 647.5,363.1 655.6,368.1 663.75,375 678.1,385.6 694.4,387.25 702.5,392" fill="none" stroke="#e8646a" stroke-width="2.2" stroke-linejoin="round"/>
<polyline points="244,182.3 344.4,182.3 352.5,195.4 368.1,195.4 375,202.75 383.75,209.75 391.9,220 399.4,233.75" fill="none" stroke="#6487cb" stroke-width="2.2" stroke-linejoin="round"/>
<defs><linearGradient id="lb" x1="0" y1="0" x2="1" y2="1"><stop offset="0" stop-color="#5d86d0"/><stop offset="1" stop-color="#0a3a9a"/></linearGradient><linearGradient id="lg" x1="0" y1="0" x2="1" y2="1"><stop offset="0" stop-color="#70c070"/><stop offset="1" stop-color="#008800"/></linearGradient><linearGradient id="lr" x1="0" y1="0" x2="1" y2="1"><stop offset="0" stop-color="#f07070"/><stop offset="1" stop-color="#e00000"/></linearGradient></defs>
<rect x="719.5" y="179.5" width="13" height="13" fill="url(#lb)" stroke="#3a3a3a"/>
<text x="734" y="190" font-family="Liberation Sans" font-size="10.5" fill="#000">Burndown</text>
<rect x="719.5" y="198.5" width="13" height="13" fill="url(#lg)" stroke="#3a3a3a"/>
<text x="734" y="209" font-family="Liberation Sans" font-size="10.5" fill="#000">Projected A</text>
<rect x="719.5" y="217.5" width="13" height="13" fill="url(#lr)" stroke="#3a3a3a"/>
<text x="734" y="228" font-family="Liberation Sans" font-size="10.5" fill="#000">Projected B</text>
<text x="201" y="445" font-family="Liberation Sans" font-size="12" fill="#000">Burndown Vs Actual Time All Users</text>
<text x="205" y="472" font-family="Liberation Sans" font-size="10.5" fill="#000">Hours</text>
<line x1="246" y1="507.5" x2="702" y2="507.5" stroke="#e6e6e6" stroke-width="1"/>
<text x="239.5" y="511.3" text-anchor="end" font-family="Liberation Sans" font-size="11" fill="#000">240</text>
<line x1="246" y1="540.5" x2="702" y2="540.5" stroke="#e6e6e6" stroke-width="1"/>
<text x="239.5" y="544.6" text-anchor="end" font-family="Liberation Sans" font-size="11" fill="#000">200</text>
<line x1="246" y1="574.5" x2="702" y2="574.5" stroke="#e6e6e6" stroke-width="1"/>
<text x="239.5" y="577.9" text-anchor="end" font-family="Liberation Sans" font-size="11" fill="#000">160</text>
<line x1="246" y1="607.5" x2="702" y2="607.5" stroke="#e6e6e6" stroke-width="1"/>
<text x="239.5" y="611.2" text-anchor="end" font-family="Liberation Sans" font-size="11" fill="#000">120</text>
<line x1="244.5" y1="491" x2="244.5" y2="614" stroke="#000" stroke-width="1.3"/>
<polyline points="244,497.3 541.2,497.3 563.9,510 610,510 656.3,524.3 679.4,534.3 702.4,548.1" fill="none" stroke="#6487cb" stroke-width="2" stroke-linejoin="round"/>
<rect x="719.5" y="494.5" width="13" height="13" fill="url(#lb)" stroke="#3a3a3a"/>
<text x="734" y="505" font-family="Liberation Sans" font-size="10.5" fill="#000">Burndown</text>
<rect x="719.5" y="513.5" width="13" height="13" fill="url(#lg)" stroke="#3a3a3a"/>
<text x="734" y="524" font-family="Liberation Sans" font-size="10.5" fill="#000">Actual Time</text>
</svg>
<!-- content scrollbars -->
<div class="a" style="left:194px;top:115px;width:1px;height:499px;background:#9cc0ee"></div>
<div class="a hsb" style="left:790px;top:115px;width:16px;height:499px"></div>
<div class="a thumbv" style="left:790px;top:133px;width:15px;height:212px"></div>
<div class="a hsb" style="left:194px;top:614px;width:612px;height:17px"></div>
<div class="a thumbh" style="left:213px;top:614px;width:508px;height:15px"></div>

<svg class="a" style="left:0;top:0" width="866" height="640" viewBox="0 0 866 640" style="pointer-events:none">
<defs><linearGradient id="arr" x1="0" y1="0" x2="1" y2="1"><stop offset="0" stop-color="#101010"/><stop offset="1" stop-color="#707070"/></linearGradient></defs>
<path d="M794.5 126 L798.5 122 L802.5 126 Z" fill="url(#arr)"/>
<path d="M794.5 603 H802.5 L798.5 607 Z" fill="url(#arr)"/>
<path d="M205 617.5 V625.5 L201 621.5 Z" fill="url(#arr)"/>
<path d="M779 617.5 V625.5 L783 621.5 Z" fill="url(#arr)"/>
<g stroke="#3a3a3a" stroke-width="1.2">
<path d="M463.5 617.5 V624.5 M466.5 617.5 V624.5 M469.5 617.5 V624.5"/>
<path d="M794 235.5 H801 M794 238.5 H801 M794 241.5 H801"/>
<path d="M84.5 484.5 V491.5 M87.5 484.5 V491.5 M90.5 484.5 V491.5"/>
</g>
</svg>
<div id="nav" class="a">
  <div class="a" style="left:-1px;top:91px;width:50px;height:40px;background:linear-gradient(90deg,#e6eefa,#eef4fc 70%,#f6f9fe);border-top:1px solid #8cb2e2;border-bottom:1px solid #8cb2e2;border-radius:2px;box-shadow:inset 0 1px 0 #fff,inset 0 -1px 0 #fff,inset -1px 0 0 #fff"></div>
  <div class="a navt" style="top:14px">Plan</div>
  <div class="a navt" style="top:59px">Track</div>
  <div class="a navt" style="top:104px;letter-spacing:-0.3px;left:-1px">Status</div>
  <div class="a navt" style="top:149px">Report</div>
  <div class="a navt" style="top:194px">Invoice</div>
</div>
</body></html>
